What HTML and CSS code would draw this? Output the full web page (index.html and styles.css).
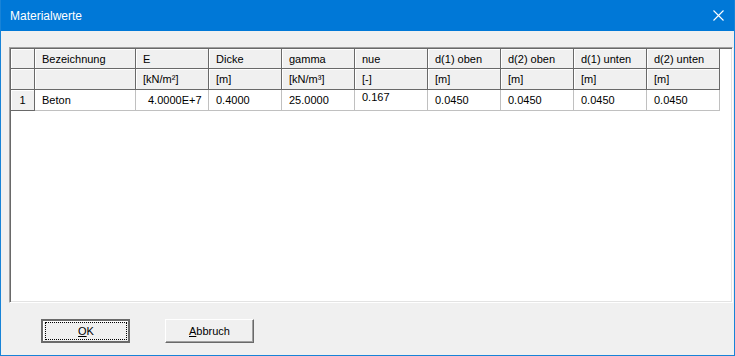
FILE: index.html
```html
<!DOCTYPE html>
<html>
<head>
    <meta charset="UTF-8">
    <title>Materialwerte</title>
    <link rel="stylesheet" href="styles.css">
</head>
<body>
<div class="window">
    <div class="titlebar">
        <span class="title">Materialwerte</span>
        <svg class="close" width="11" height="11" viewBox="0 0 11 11">
            <path d="M0.5 0.5 L10.5 10.5 M10.5 0.5 L0.5 10.5" stroke="#fff" stroke-width="1.1" fill="none"/>
        </svg>
    </div>
    <div class="content">
        <div class="grid">
            <div class="cells">
                <!-- Kopfzeile -->
                <div class="cell head"></div>
                <div class="cell head">Bezeichnung</div>
                <div class="cell head">E</div>
                <div class="cell head">Dicke</div>
                <div class="cell head">gamma</div>
                <div class="cell head">nue</div>
                <div class="cell head">d(1) oben</div>
                <div class="cell head">d(2) oben</div>
                <div class="cell head">d(1) unten</div>
                <div class="cell head">d(2) unten</div>
                <!-- Einheiten -->
                <div class="cell head"></div>
                <div class="cell head"></div>
                <div class="cell head">[kN/m²]</div>
                <div class="cell head">[m]</div>
                <div class="cell head">[kN/m³]</div>
                <div class="cell head">[-]</div>
                <div class="cell head">[m]</div>
                <div class="cell head">[m]</div>
                <div class="cell head">[m]</div>
                <div class="cell head">[m]</div>
                <!-- Werte -->
                <div class="cell head num">1</div>
                <div class="cell">Beton</div>
                <div class="cell wide">4.0000E+7</div>
                <div class="cell">0.4000</div>
                <div class="cell">25.0000</div>
                <div class="cell high">0.167</div>
                <div class="cell">0.0450</div>
                <div class="cell">0.0450</div>
                <div class="cell">0.0450</div>
                <div class="cell">0.0450</div>
            </div>
        </div>
        <div class="buttons">
            <button class="btn default"><span class="focus"><u>O</u>K</span></button>
            <button class="btn"><u>A</u>bbruch</button>
        </div>
    </div>
</div>
</body>
</html>
```

FILE: styles.css
```css
html,body{
    margin: 0;
    padding: 0;
}
body{
    font-family: "Liberation Sans", Arial, sans-serif;
    font-size: 11px;
    color: #000;
}
.window{
    width: 735px;
    height: 356px;
    box-sizing: border-box;
    border: 1px solid #1883d7;
    border-top: 0;
    background: #f0f0f0;
    display: flex;
    flex-direction: column;
}
.titlebar{
    height: 31px;
    background: #0078d7;
    display: flex;
    align-items: center;
    justify-content: space-between;
    padding: 0 10px 0 9px;
}
.title{
    color: #fff;
    font-size: 12px;
}
.close{
    display: block;
    margin-top: -1px;
}
.content{
    padding: 16px 0 0 8px;
}
.grid{
    width: 724px;
    height: 256px;
    box-sizing: border-box;
    padding: 1px;
    background: #fff;
    border: 1px solid;
    border-color: #a0a0a0 #fff #fff #a0a0a0;
    box-shadow: inset 1px 1px 0 #696969, inset -1px -1px 0 #e3e3e3;
}
.cells{
    display: grid;
    grid-template-columns: 24px 101px repeat(8, 73px);
    grid-template-rows: 20px 21px 21px;
}
.cell{
    box-sizing: border-box;
    display: flex;
    align-items: center;
    padding-left: 7px;
    white-space: nowrap;
    overflow: hidden;
    background: #fff;
    border-right: 1px solid #c0c0c0;
    border-bottom: 1px solid #c0c0c0;
}
.cell.head{
    background: #f0f0f0;
    border-right-color: #696969;
    border-bottom-color: #696969;
    box-shadow: inset 1px 1px 0 #fff;
}
.cell.num{
    justify-content: center;
    padding-left: 0;
}
.cell.wide{
    padding-left: 12px;
}
.cell.high{
    align-items: flex-start;
    padding-top: 1px;
}
.buttons{
    display: flex;
    gap: 35px;
    padding: 16px 0 0 32px;
}
.btn{
    width: 89px;
    height: 24px;
    box-sizing: border-box;
    margin: 0;
    padding: 0;
    font: 11px "Liberation Sans", Arial, sans-serif;
    color: #000;
    background: #f0f0f0;
    border: 1px solid;
    border-color: #fff #696969 #696969 #fff;
    box-shadow: inset -1px -1px 0 #a0a0a0;
    display: flex;
    align-items: center;
    justify-content: center;
}
.btn.default{
    border: 2px solid #6a6a6a;
    box-shadow: inset 1px 1px 0 #fff;
    padding: 1px 1px 1px 2px;
    align-items: stretch;
}
.focus{
    flex: 1;
    border: 1px dotted #000;
    display: flex;
    align-items: center;
    justify-content: center;
}
```
